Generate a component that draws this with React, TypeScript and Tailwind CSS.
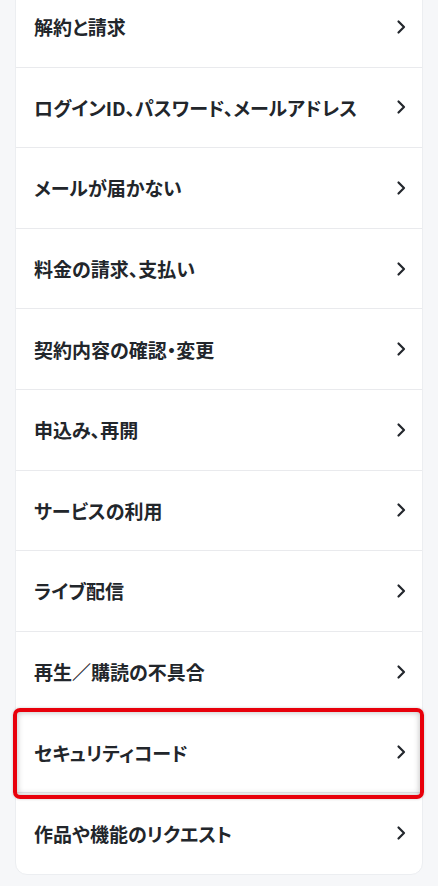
import React from "react";

const items = [
  "解約と請求",
  "ログインID、パスワード、メールアドレス",
  "メールが届かない",
  "料金の請求、支払い",
  "契約内容の確認・変更",
  "申込み、再開",
  "サービスの利用",
  "ライブ配信",
  "再生／購読の不具合",
  "セキュリティコード",
  "作品や機能のリクエスト",
];

function Chevron() {
  return (
    <svg width="10" height="16" viewBox="0 0 10 16" fill="none" className="shrink-0">
      <path d="M2.5 2.5 L8 8 L2.5 13.5" stroke="#23272d" strokeWidth="2.2" strokeLinecap="round" strokeLinejoin="round" />
    </svg>
  );
}

export default function App() {
  return (
    <div
      className="w-[438px] h-[886px] overflow-hidden bg-[#f6f7f9] px-[15px]"
      style={{ fontFamily: '"Noto Sans CJK JP", "Noto Sans", sans-serif' }}
    >
      <div className="mt-[-14px] bg-white rounded-[12px] border border-[#eceef1]">
        {items.map((t, i) => (
          <div
            key={t}
            className={`relative h-[80.6px] flex items-center justify-between pl-[18px] pr-[16px] ${
              i < items.length - 1 ? "border-b border-[#e9eaed]" : ""
            }`}
          >
            <span className="text-[19px] font-bold text-[#22262b] [font-feature-settings:'palt'] leading-none">
              {t}
            </span>
            <Chevron />
            {t === "セキュリティコード" && (
              <div className="absolute left-[-3px] right-[-2px] top-[-4px] bottom-[-7px] rounded-[7px] border-[4px] border-[#e8000b] shadow-[inset_0_0_6px_rgba(0,0,0,0.28),0_0_3px_rgba(0,0,0,0.2)] pointer-events-none" />
            )}
          </div>
        ))}
      </div>
    </div>
  );
}
